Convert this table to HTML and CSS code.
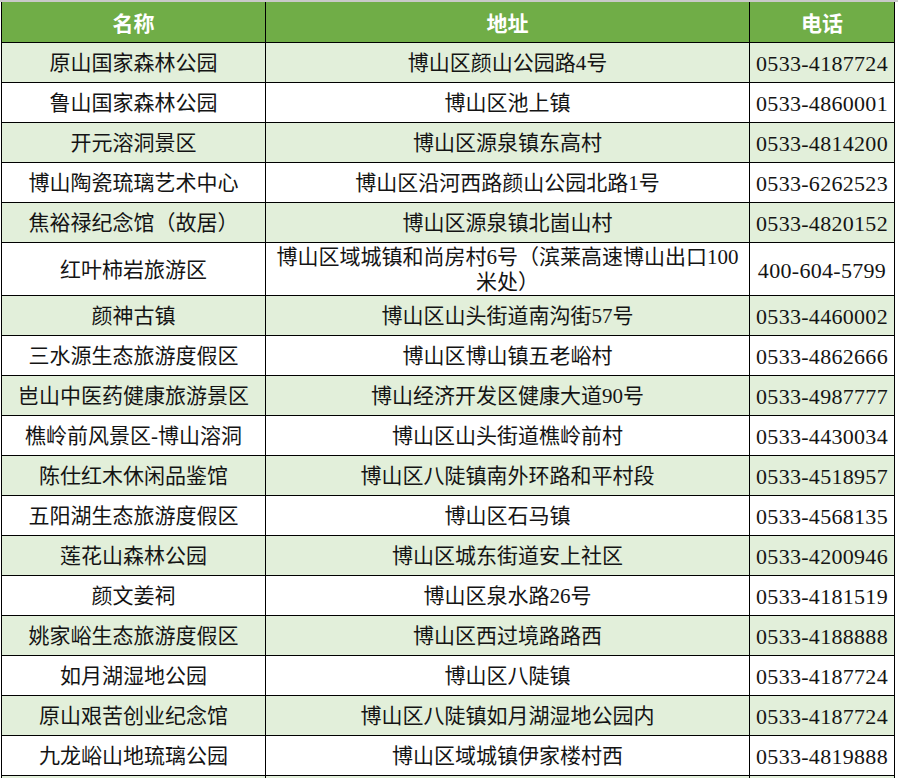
FILE: index.html
```html
<!DOCTYPE html>
<html lang="zh-CN">
<head>
<meta charset="utf-8">
<title>博山区景区联系方式</title>
<link rel="stylesheet" href="styles.css">
</head>
<body>
<div class="topbar"></div>
<div class="sheet">
  <div class="row head">
    <div class="cell">名称</div>
    <div class="cell">地址</div>
    <div class="cell">电话</div>
  </div>
  <div class="row odd">
    <div class="cell">原山国家森林公园</div>
    <div class="cell">博山区颜山公园路4号</div>
    <div class="cell tel">0533-4187724</div>
  </div>
  <div class="row">
    <div class="cell">鲁山国家森林公园</div>
    <div class="cell">博山区池上镇</div>
    <div class="cell tel">0533-4860001</div>
  </div>
  <div class="row odd">
    <div class="cell">开元溶洞景区</div>
    <div class="cell">博山区源泉镇东高村</div>
    <div class="cell tel">0533-4814200</div>
  </div>
  <div class="row">
    <div class="cell">博山陶瓷琉璃艺术中心</div>
    <div class="cell">博山区沿河西路颜山公园北路1号</div>
    <div class="cell tel">0533-6262523</div>
  </div>
  <div class="row odd">
    <div class="cell">焦裕禄纪念馆（故居）</div>
    <div class="cell">博山区源泉镇北崮山村</div>
    <div class="cell tel">0533-4820152</div>
  </div>
  <div class="row tall">
    <div class="cell">红叶柿岩旅游区</div>
    <div class="cell wrap">博山区域城镇和尚房村6号（滨莱高速博山出口100<br>米处）</div>
    <div class="cell tel">400-604-5799</div>
  </div>
  <div class="row odd">
    <div class="cell">颜神古镇</div>
    <div class="cell">博山区山头街道南沟街57号</div>
    <div class="cell tel">0533-4460002</div>
  </div>
  <div class="row">
    <div class="cell">三水源生态旅游度假区</div>
    <div class="cell">博山区博山镇五老峪村</div>
    <div class="cell tel">0533-4862666</div>
  </div>
  <div class="row odd">
    <div class="cell">岜山中医药健康旅游景区</div>
    <div class="cell">博山经济开发区健康大道90号</div>
    <div class="cell tel">0533-4987777</div>
  </div>
  <div class="row">
    <div class="cell">樵岭前风景区-博山溶洞</div>
    <div class="cell">博山区山头街道樵岭前村</div>
    <div class="cell tel">0533-4430034</div>
  </div>
  <div class="row odd">
    <div class="cell">陈仕红木休闲品鉴馆</div>
    <div class="cell">博山区八陡镇南外环路和平村段</div>
    <div class="cell tel">0533-4518957</div>
  </div>
  <div class="row">
    <div class="cell">五阳湖生态旅游度假区</div>
    <div class="cell">博山区石马镇</div>
    <div class="cell tel">0533-4568135</div>
  </div>
  <div class="row odd">
    <div class="cell">莲花山森林公园</div>
    <div class="cell">博山区城东街道安上社区</div>
    <div class="cell tel">0533-4200946</div>
  </div>
  <div class="row">
    <div class="cell">颜文姜祠</div>
    <div class="cell">博山区泉水路26号</div>
    <div class="cell tel">0533-4181519</div>
  </div>
  <div class="row odd">
    <div class="cell">姚家峪生态旅游度假区</div>
    <div class="cell">博山区西过境路路西</div>
    <div class="cell tel">0533-4188888</div>
  </div>
  <div class="row">
    <div class="cell">如月湖湿地公园</div>
    <div class="cell">博山区八陡镇</div>
    <div class="cell tel">0533-4187724</div>
  </div>
  <div class="row odd">
    <div class="cell">原山艰苦创业纪念馆</div>
    <div class="cell">博山区八陡镇如月湖湿地公园内</div>
    <div class="cell tel">0533-4187724</div>
  </div>
  <div class="row">
    <div class="cell">九龙峪山地琉璃公园</div>
    <div class="cell">博山区域城镇伊家楼村西</div>
    <div class="cell tel">0533-4819888</div>
  </div>
  <div class="row odd">
    <div class="cell"></div>
    <div class="cell"></div>
    <div class="cell tel"></div>
  </div>
</div>
</body>
</html>
```
FILE: styles.css
```css
html, body {
  margin: 0;
  padding: 0;
  background: #ffffff;
  overflow: hidden;
}

.topbar {
  height: 2px;
  background: #c9c9c9;
}

.sheet {
  margin-left: 1px;
  width: 893px;
  border-left: 1px solid #000;
  display: grid;
  grid-template-columns: 264px 484px 145px;
  font-family: "Liberation Serif", "Noto Sans CJK SC", sans-serif;
  font-size: 21px;
  color: #141414;
}

.row {
  display: contents;
}

.cell {
  box-sizing: border-box;
  height: 40px;
  padding-top: 2px;
  border-right: 1px solid #000;
  border-bottom: 1px solid #000;
  display: flex;
  align-items: center;
  justify-content: center;
  text-align: center;
  white-space: nowrap;
  overflow: hidden;
  line-height: 25px;
}

.head .cell {
  height: 41px;
  background: #70ad47;
  color: #ffffff;
  font-family: "Noto Sans CJK SC", sans-serif;
  font-weight: 700;
  font-size: 21px;
  padding-top: 1px;
}

.odd .cell {
  background: #e2efda;
}

.tall .cell {
  height: 53px;
}

.wrap {
  white-space: normal;
  line-height: 25px;
  padding-top: 1px;
}

.tel {
  font-family: "Liberation Serif", serif;
  font-size: 22px;
  letter-spacing: 0.3px;
}
```
